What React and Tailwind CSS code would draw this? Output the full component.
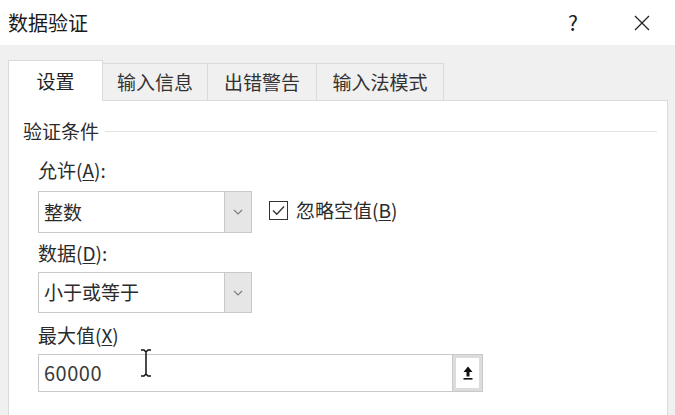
import React from 'react';

const font = { fontFamily: '"Noto Sans CJK SC", "Noto Sans", sans-serif' };

const Chevron = () => (
  <svg width="10" height="6" viewBox="0 0 10 6" fill="none">
    <path d="M1 1 L5 5 L9 1" stroke="#7a7a7a" strokeWidth="1.1" />
  </svg>
);

const Select = ({ value }) => (
  <div className="flex w-[214px] border border-[#c9c9c9] bg-white">
    <div className="flex flex-1 items-center pl-[5px] text-[19px] text-[#2b2b2b]">{value}</div>
    <div className="flex w-[27px] items-center justify-center border-l border-[#c9c9c9] bg-[#e6e6e6]">
      <Chevron />
    </div>
  </div>
);

const Tab = ({ label, active, w }) =>
  active ? (
    <div className="relative z-10 -mb-px flex h-[41px] w-[95px] items-center justify-center border border-b-0 border-[#dadada] bg-white text-[19px] text-[#222]">
      {label}
    </div>
  ) : (
    <div
      className={`flex h-[37px] items-center justify-center border border-l-0 border-b-0 border-[#dadada] bg-[#f0f0f0] text-[19px] text-[#333] ${w}`}
    >
      {label}
    </div>
  );

export default function App() {
  return (
    <div className="flex h-[415px] w-[675px] flex-col overflow-hidden bg-white" style={font}>
      {/* title bar */}
      <div className="flex h-[45px] items-center bg-white pl-[8px]">
        <span className="text-[20px] text-[#1a1a1a]">数据验证</span>
        <span className="ml-auto mr-[56px] text-[21px] text-[#1a1a1a]">?</span>
        <svg width="16" height="16" viewBox="0 0 16 16" className="mr-[25px]">
          <path d="M1 1 L15 15 M15 1 L1 15" stroke="#222" strokeWidth="1.3" />
        </svg>
      </div>

      <div className="flex flex-1 flex-col bg-[#f0f0f0] pl-[8px] pr-[7px] pt-[15px]">
        <div className="flex items-end">
          <Tab label="设置" active />
          <Tab label="输入信息" w="w-[105px]" />
          <Tab label="出错警告" w="w-[109px]" />
          <Tab label="输入法模式" w="w-[127px]" />
        </div>

        <div className="relative flex-1 border border-b-0 border-[#dadada] bg-white pl-[14px] pr-[10px] pt-[19px]">
          <div className="flex h-[22px] items-center">
            <span className="text-[19px] text-[#2b2b2b]">验证条件</span>
            <div className="ml-[6px] mt-[1px] flex-1 border-t border-[#e3e3e3]" />
          </div>

          <div className="pl-[15px]">
            <div className="mt-[16px] h-[24px] text-[19px] leading-[24px] text-[#2b2b2b]">
              允许(<span className="underline underline-offset-2">A</span>):
            </div>
            <div className="mt-[9px] flex h-[42px] items-center">
              <div className="flex h-[42px]">
                <Select value="整数" />
              </div>
              <div className="ml-[17px] flex items-center self-start pt-[5px]">
                <div className="flex h-[19px] w-[19px] items-center justify-center border border-[#333] bg-white">
                  <svg width="13" height="11" viewBox="0 0 13 11" fill="none">
                    <path d="M1 5.5 L4.8 9.3 L12 1.5" stroke="#333" strokeWidth="1.3" />
                  </svg>
                </div>
                <span className="ml-[8px] text-[19px] text-[#2b2b2b]">
                  忽略空值(<span className="underline underline-offset-2">B</span>)
                </span>
              </div>
            </div>

            <div className="mt-[8px] h-[24px] text-[19px] leading-[24px] text-[#2b2b2b]">
              数据(<span className="underline underline-offset-2">D</span>):
            </div>
            <div className="mt-[7px] flex h-[41px]">
              <Select value="小于或等于" />
            </div>

            <div className="mt-[10px] h-[24px] text-[19px] leading-[24px] text-[#2b2b2b]">
              最大值(<span className="underline underline-offset-2">X</span>)
            </div>
            <div className="relative mt-[7px] flex h-[38px] w-[445px] border border-[#c9c9c9] bg-white">
              <div className="flex flex-1 items-center pl-[5px] text-[20px] tracking-[0.5px] text-[#3a3a3a]">60000</div>
              <div className="flex w-[30px] items-center justify-center border-l border-[#c9c9c9] bg-[#dcdcdc] p-[3px]">
                <div className="flex h-full w-full items-center justify-center bg-white">
                  <svg width="10" height="14" viewBox="0 0 10 14">
                    <path d="M5 0.5 L9.5 6 L6.5 6 L6.5 10.5 L3.5 10.5 L3.5 6 L0.5 6 Z" fill="#111" />
                    <rect x="0.5" y="12" width="9" height="1.6" fill="#111" />
                  </svg>
                </div>
              </div>
              {/* mouse I-beam cursor */}
              <svg width="12" height="28" viewBox="0 0 12 28" className="absolute left-[101px] top-[-6px]">
                <path d="M1 1 L4 1 L6 3 L8 1 L11 1 M6 3 L6 25 M1 27 L4 27 L6 25 L8 27 L11 27" stroke="#111" strokeWidth="1.5" fill="none" />
              </svg>
            </div>
          </div>
        </div>
      </div>
    </div>
  );
}
